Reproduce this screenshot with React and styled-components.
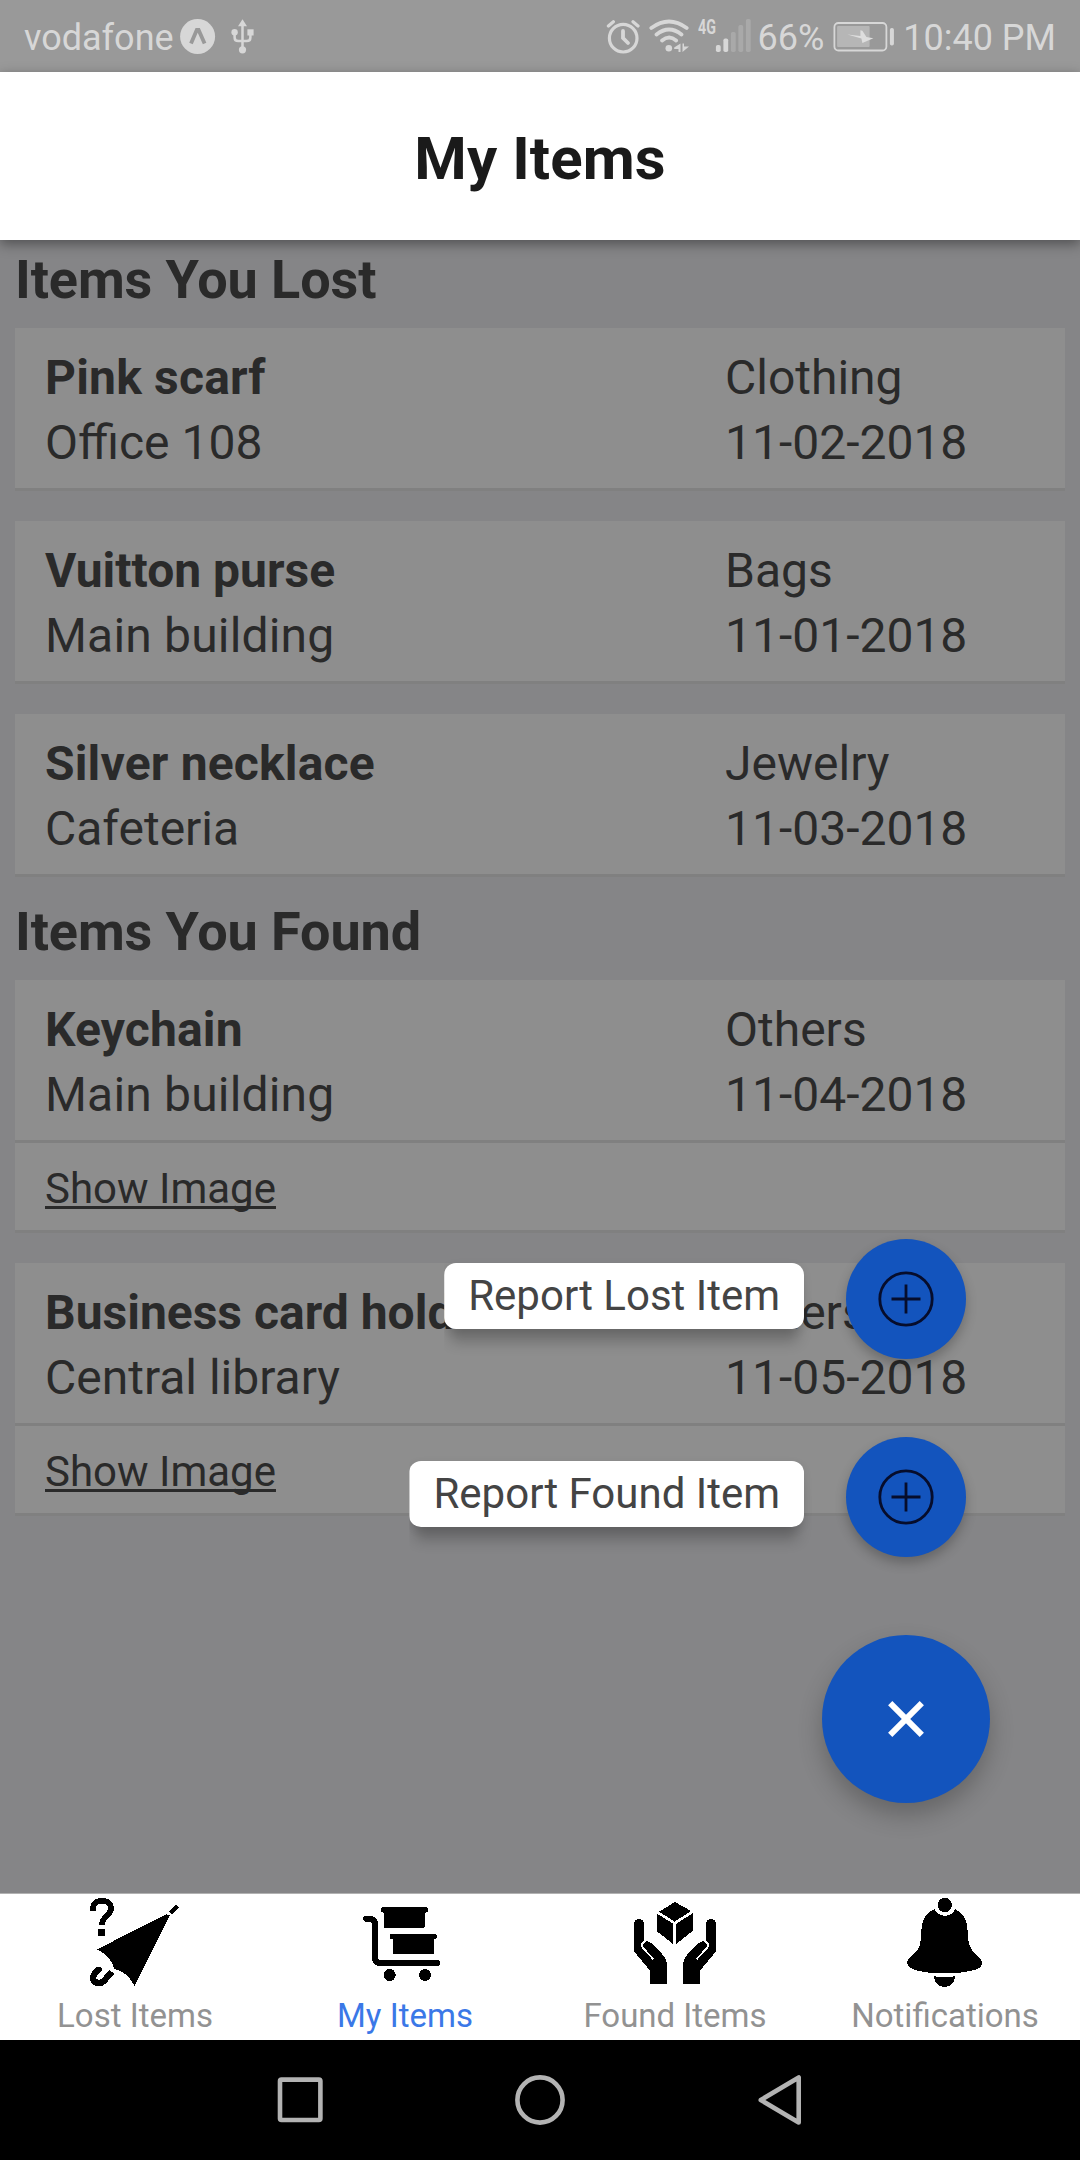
import React from "react";
import styled, { createGlobalStyle } from "styled-components";

const GlobalStyle = createGlobalStyle`
  * { box-sizing: border-box; }
  body { margin: 0; background: #858587; }
`;

const Screen = styled.div`
  width: 1080px;
  height: 2160px;
  display: flex;
  flex-direction: column;
  overflow: hidden;
  background: #858587;
  color: #2a2a2a;
  font-family: Roboto, "Liberation Sans", sans-serif;
`;

const StatusBar = styled.div`
  flex: none;
  height: 72px;
  padding: 0 24px;
  display: flex;
  justify-content: space-between;
  background: #999999;
  color: #d7d7d7;
`;

const StatusGroup = styled.div`
  display: flex;
  align-items: flex-start;
`;

const StatusText = styled.span`
  margin-left: ${(p) => p.$gap || 0}px;
  padding-top: 17px;
  font-size: 36px;
  line-height: 42px;
  white-space: nowrap;
`;

const StatusIcon = styled.svg`
  display: block;
  flex: none;
  height: 72px;
  width: ${(p) => p.$width}px;
  margin-left: ${(p) => p.$gap}px;
`;

const NetworkType = styled.span`
  width: 18px;
  margin-left: 9px;
  padding-top: 15px;
  font-size: 21px;
  font-weight: 700;
  line-height: 24px;
  transform: scaleX(0.68);
  transform-origin: left;
`;

const Header = styled.header`
  flex: none;
  position: relative;
  z-index: 1;
  height: 168px;
  padding-top: 6px;
  display: flex;
  align-items: center;
  justify-content: center;
  background: #ffffff;
  box-shadow: 0 4px 12px rgba(0, 0, 0, 0.4);
`;

const Title = styled.h1`
  margin: 0;
  color: #1a1a1a;
  font-size: 60px;
  font-weight: 700;
  line-height: 80px;
  letter-spacing: 0.1px;
`;

const Content = styled.main`
  flex: 1;
  position: relative;
  padding: 0 15px;
`;

const SectionTitle = styled.h2`
  height: 73px;
  margin: 0;
  padding-top: 3px;
  font-size: 54px;
  font-weight: 700;
  line-height: 73px;
  letter-spacing: -0.1px;
`;

const Card = styled.article`
  margin: 15px 0 ${(p) => (p.$last ? 15 : 30)}px;
  & + & { margin-top: 0; }
`;

const CardRow = styled.div`
  display: flex;
  padding: 17px 30px 13px;
  background: #8e8e8e;
  border-bottom: 3px solid #808080;
`;

const Column = styled.div`
  width: ${(p) => p.$width}px;
  display: flex;
  flex-direction: column;
`;

const Field = styled.span`
  font-size: 48px;
  font-weight: ${(p) => (p.$bold ? 700 : 400)};
  letter-spacing: ${(p) => (p.$tracking ? `${p.$tracking}px` : "normal")};
  line-height: 65px;
  white-space: nowrap;
`;

const ImageLink = styled.a`
  font-size: 42px;
  line-height: 57px;
  text-decoration: underline;
  text-decoration-thickness: 3px;
  text-underline-offset: 3px;
  text-decoration-skip-ink: none;
`;

const ActionMenu = styled.div`
  position: absolute;
  right: 90px;
  bottom: 90px;
  display: flex;
  flex-direction: column;
  align-items: flex-end;
  gap: 78px;
`;

const Action = styled.div`
  display: flex;
  align-items: center;
  gap: 42px;
  margin-right: 24px;
`;

const ActionLabel = styled.span`
  height: 66px;
  margin-bottom: 6px;
  padding: 0 24px;
  border-radius: 12px;
  background: #ffffff;
  color: #444444;
  box-shadow:
    0 19px 14px -6px rgba(0, 0, 0, 0.22),
    0 3px 8px rgba(0, 0, 0, 0.1);
  clip-path: inset(-20px -20px -50px 0);
  font-size: 42px;
  line-height: 66px;
  white-space: nowrap;
`;

const RoundButton = styled.button`
  width: ${(p) => p.$size}px;
  height: ${(p) => p.$size}px;
  padding: 0;
  border: 0;
  border-radius: 50%;
  display: flex;
  align-items: center;
  justify-content: center;
  background: #1354bd;
  box-shadow: 0 ${(p) => p.$lift}px ${(p) => p.$lift * 2}px rgba(0, 0, 0, 0.24);
`;

const TabBar = styled.nav`
  flex: none;
  height: 147px;
  display: grid;
  grid-template-columns: repeat(4, 1fr);
  border-top: 1px solid #b2b2b2;
  background: #ffffff;
`;

const Tab = styled.div`
  display: flex;
  flex-direction: column;
  align-items: center;
  padding-top: 2px;
  color: ${(p) => (p.$active ? "#3b78e7" : "#929292")};
  font-size: 33px;
  line-height: 40px;
`;

const TabIcon = styled.svg`
  display: block;
  width: 92px;
  height: 92px;
  margin-bottom: 8px;
  color: #000000;
  shape-rendering: crispEdges;
`;

const SystemNav = styled.div`
  flex: none;
  height: 120px;
  display: grid;
  grid-template-columns: repeat(3, 240px);
  justify-content: center;
  align-items: center;
  justify-items: center;
  background: #000000;
`;

const lostItems = [
  { name: "Pink scarf", place: "Office 108", kind: "Clothing", date: "11-02-2018", nameTracking: 0.2 },
  { name: "Vuitton purse", place: "Main building", kind: "Bags", date: "11-01-2018", placeTracking: 0.18 },
  { name: "Silver necklace", place: "Cafeteria", kind: "Jewelry", date: "11-03-2018", nameTracking: 0.18 },
];

const foundItems = [
  { name: "Keychain", place: "Main building", kind: "Others", date: "11-04-2018", image: true, nameTracking: 0.15, placeTracking: 0.18 },
  { name: "Business card holder", place: "Central library", kind: "Others", date: "11-05-2018", image: true },
];

function ItemCard({ item, last }) {
  return (
    <Card $last={last}>
      <CardRow>
        <Column $width={680}>
          <Field $bold $tracking={item.nameTracking}>{item.name}</Field>
          <Field $tracking={item.placeTracking}>{item.place}</Field>
        </Column>
        <Column $width={310}>
          <Field>{item.kind}</Field>
          <Field>{item.date}</Field>
        </Column>
      </CardRow>
      {item.image && (
        <CardRow>
          <ImageLink>Show Image</ImageLink>
        </CardRow>
      )}
    </Card>
  );
}

function ReportAction({ label }) {
  return (
    <Action>
      <ActionLabel>{label}</ActionLabel>
      <RoundButton $size={120} $lift={6}>
        <svg width="56" height="56" viewBox="0 0 56 56" fill="none" stroke="#060d2c" strokeWidth="2.8">
          <circle cx="28" cy="28" r="26.2" />
          <path d="M28 13.5v29M13.5 28h29" />
        </svg>
      </RoundButton>
    </Action>
  );
}

function StatusIcons() {
  return (
    <StatusBar>
      <StatusGroup>
        <StatusText>vodafone</StatusText>
        <StatusIcon $width={36} $gap={6} viewBox="0 0 36 72">
          <circle cx="17.6" cy="36.5" r="17.5" fill="#d7d7d7" />
          <path d="M11 43.5 16.8 30h1.8l6 13.5" fill="none" stroke="#999999" strokeWidth="3.8" />
        </StatusIcon>
        <StatusIcon $width={24} $gap={15} viewBox="0 0 24 72" fill="#d7d7d7">
          <path d="M11.5 19.3 16 26.2H7Z" />
          <circle cx="11.5" cy="49.8" r="3.6" />
          <circle cx="3.6" cy="32.3" r="3.2" />
          <path d="M16.4 29.3h6.2v6.2h-6.2z" />
          <path d="M11.5 24v25M3.6 33v4.5q0 3.6 3.6 3.6h8.6q3.6 0 3.6-3.6V33" fill="none" stroke="#d7d7d7" strokeWidth="2.5" />
        </StatusIcon>
      </StatusGroup>
      <StatusGroup>
        <StatusIcon $width={34} $gap={0} viewBox="0 0 34 72" fill="none" stroke="#d7d7d7" strokeLinecap="round">
          <circle cx="17.2" cy="38.2" r="13.8" strokeWidth="3.2" />
          <path d="M17 31v7l5 5" strokeWidth="3.8" />
          <path d="m2.4 26 5-4.3M32 26l-5-4.3" strokeWidth="3.2" />
        </StatusIcon>
        <StatusIcon $width={40} $gap={9} viewBox="0 0 40 72" fill="none" stroke="#d7d7d7" strokeWidth="3.8" strokeLinecap="round">
          <path d="M2.3 28q17.7-13 35.4 0M7.5 34.5q12.5-10 25 0M13.1 40.5q7-6 14 0" />
          <circle cx="19.8" cy="48.2" r="3.3" fill="#d7d7d7" stroke="none" />
          <path d="M31.5 43.5v8.5h-2v-3h-4.3v-1.5zM33.5 52v-8.5h1.5v3h5z" fill="#d7d7d7" stroke="none" />
        </StatusIcon>
        <NetworkType>4G</NetworkType>
        <StatusIcon $width={36} $gap={-1} viewBox="0 0 36 72" fill="#d7d7d7">
          <rect x=".9" y="45" width="4.8" height="7" rx="1.8" />
          <rect x="8.4" y="38.5" width="4.8" height="13.5" rx="1.8" />
          <g opacity=".27">
            <rect x="15.9" y="32" width="4.8" height="20" rx="1.8" />
            <rect x="23.4" y="25" width="4.8" height="27" rx="1.8" />
            <rect x="30.9" y="19" width="4.8" height="33" rx="1.8" />
          </g>
        </StatusIcon>
        <StatusText $gap={6}>66%</StatusText>
        <StatusIcon $width={61} $gap={9} viewBox="0 0 61 72">
          <rect x="1.4" y="23" width="52" height="27.5" rx="4" fill="none" stroke="#d7d7d7" strokeWidth="1.8" />
          <rect x="4.1" y="26" width="32.5" height="21" rx="1" fill="#b6b6b6" />
          <path d="M14.4 34.5 27.4 36v-5.8l2 .5 4 6.2 7 1.3-11 4.8-1-4.4z" fill="#dedede" />
          <rect x="56.9" y="28" width="4" height="17.5" rx="1.8" fill="#d7d7d7" />
        </StatusIcon>
        <StatusText $gap={9}>10:40 PM</StatusText>
      </StatusGroup>
    </StatusBar>
  );
}

function UmbrellaIcon() {
  return (
    <TabIcon viewBox="87 48 276 276">
      <path d="M111 208 319 103 330 106 223 318C214 299 206 290 190 278Q175 268 162 267C159 246 142 222 111 208Z" />
      <g fill="none" stroke="currentColor">
        <path d="m332 99 20-20" strokeWidth="12" />
        <path d="m156 276-23 25C121 315 99 310 99 292C99 284 104 281 116 269" strokeWidth="19" />
        <path d="M116 269h.1" strokeWidth="19" strokeLinecap="round" />
        <path d="M98 92C98 72 109 62 126 62C143 62 153 72 153 86C153 106 126 108 126 135" strokeWidth="17" />
      </g>
      <path d="M115 147h20v20h-20z" />
    </TabIcon>
  );
}

function CartIcon() {
  return (
    <TabIcon viewBox="117 48 276 276">
      <path d="M138 116h9q18 1 18 18v98q0 17 17 17h169" fill="none" stroke="currentColor" strokeWidth="18" strokeLinecap="round" />
      <circle cx="209" cy="285" r="18" />
      <circle cx="315" cy="285" r="18" />
      <rect x="183" y="81" width="141" height="17" rx="7" />
      <rect x="192" y="84" width="123" height="60" rx="6" />
      <rect x="210" y="161" width="141" height="17" rx="7" />
      <rect x="219" y="163" width="123" height="59" rx="4" />
    </TabIcon>
  );
}

function Hand() {
  return (
    <>
      <path d="M192 131A15 14 0 0 1 222 131V184C230 183 240 184 247 191L278 224Q292 240 292 262V312H240V272L192 214Z" />
      <path d="M228 182C213 187 214 200 222 208L251 238" fill="none" stroke="#ffffff" strokeWidth="6" />
    </>
  );
}

function HandsIcon() {
  return (
    <TabIcon viewBox="177 48 276 276">
      <path d="M315 66 363 93 314 125 267 95ZM261 101 309 131V192L261 154ZM369 99 319 131V192L369 152Z" />
      <Hand />
      <g transform="matrix(-1 0 0 1 630 0)">
        <Hand />
      </g>
    </TabIcon>
  );
}

function BellIcon() {
  return (
    <TabIcon viewBox="207 48 276 276">
      <circle cx="344" cy="75" r="21.5" />
      <path d="M313 87C290 97 275 118 274 152C273 194 268 206 254 220C244 230 231 236 231 248C231 265 252 272 298 278H389C438 272 457 265 456 247C456 236 440 229 429 214C417 198 414 186 413 152C412 118 398 98 375 87C366 114 323 114 313 87Z" />
      <path d="M312 288C326 293 361 293 375 288C376 308 362 321 344 321C326 321 312 308 312 288Z" />
    </TabIcon>
  );
}

const tabs = [
  { label: "Lost Items", Icon: UmbrellaIcon },
  { label: "My Items", Icon: CartIcon, active: true },
  { label: "Found Items", Icon: HandsIcon },
  { label: "Notifications", Icon: BellIcon },
];

export default function App() {
  return (
    <>
      <GlobalStyle />
      <Screen>
        <StatusIcons />
        <Header>
          <Title>My Items</Title>
        </Header>
        <Content>
          <SectionTitle>Items You Lost</SectionTitle>
          {lostItems.map((item, i) => (
            <ItemCard key={item.name} item={item} last={i === lostItems.length - 1} />
          ))}
          <SectionTitle>Items You Found</SectionTitle>
          {foundItems.map((item) => (
            <ItemCard key={item.name} item={item} />
          ))}
          <ActionMenu>
            <ReportAction label="Report Lost Item" />
            <ReportAction label="Report Found Item" />
            <RoundButton $size={168} $lift={12}>
              <svg width="36" height="36" viewBox="0 0 36 36" fill="none" stroke="#ffffff" strokeWidth="6">
                <path d="m2.2 2.2 31.6 31.6M33.8 2.2 2.2 33.8" />
              </svg>
            </RoundButton>
          </ActionMenu>
        </Content>
        <TabBar>
          {tabs.map(({ label, Icon, active }) => (
            <Tab key={label} $active={active}>
              <Icon />
              {label}
            </Tab>
          ))}
        </TabBar>
        <SystemNav>
          <svg width="50" height="50" viewBox="0 0 50 50" fill="none" stroke="#b3b3b3" strokeWidth="4.6">
            <rect x="5" y="4.6" width="40.4" height="40.4" rx="1.5" />
          </svg>
          <svg width="50" height="50" viewBox="0 0 50 50" fill="none" stroke="#b3b3b3" strokeWidth="4.6">
            <circle cx="25" cy="25" r="22.6" />
          </svg>
          <svg width="50" height="50" viewBox="0 0 50 50" fill="none" stroke="#b3b3b3" strokeWidth="4.6" strokeLinejoin="round">
            <path d="M43.7 2.5v45L5.8 25z" />
          </svg>
        </SystemNav>
      </Screen>
    </>
  );
}
